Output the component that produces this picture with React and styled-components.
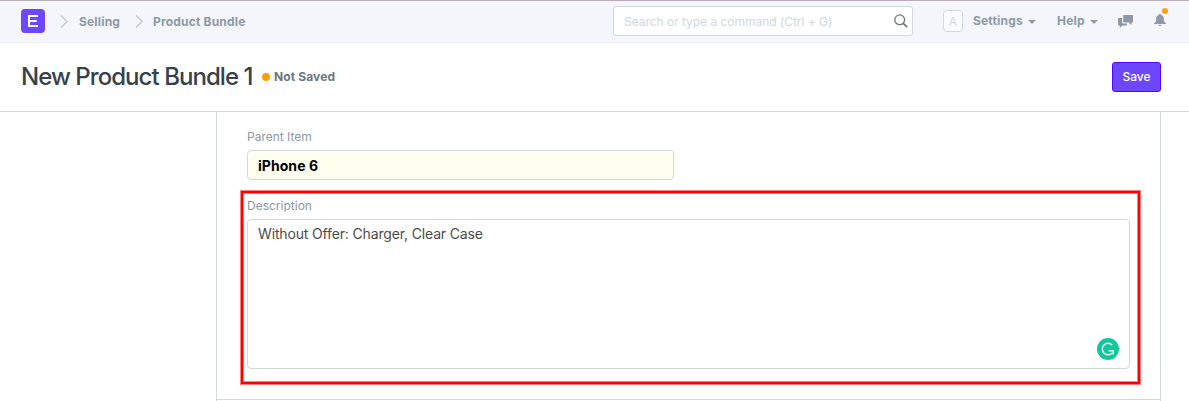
import React from "react";
import styled, { createGlobalStyle } from "styled-components";

const Global = createGlobalStyle`
  * { box-sizing: border-box; }
  body {
    margin: 0;
    background: #fff;
    font-family: Inter, "Liberation Sans", sans-serif;
    font-size: 12px;
    color: #36414c;
    overflow: hidden;
  }
`;

const Page = styled.div`
  height: 401px;
  display: flex;
  flex-direction: column;
  overflow: hidden;
`;

const Navbar = styled.header`
  flex: none;
  height: 43px;
  display: flex;
  align-items: center;
  padding: 0 20px 0 21px;
  background: #f5f6fb;
  border-top: 1px solid #b7aeb8;
  border-bottom: 1px solid #ebeff2;
`;

const Brand = styled.div`
  width: 24px;
  height: 24px;
  margin-top: -2px;
  border-radius: 4px;
  background: #6b48ff;
  display: flex;
  align-items: center;
  justify-content: center;
`;

const Crumbs = styled.nav`
  display: flex;
  align-items: center;
  flex: 1;
`;

const NavText = styled.span`
  font-weight: 700;
  line-height: 18px;
  color: #8d99a6;
  white-space: nowrap;
  letter-spacing: 0.18px;
`;

const MenuText = styled(NavText)`
  margin-top: -1px;
`;

const Chevron = styled.svg`
  width: 8px;
  height: 13px;
  margin: 0 ${(p) => p.$after}px 0 ${(p) => p.$before}px;
  fill: none;
  stroke: #c0cad3;
  stroke-width: 1.4;
`;

const Search = styled.div`
  width: 300px;
  height: 30px;
  margin: -1px 30px 0 0;
  padding: 0 4px 0 10px;
  display: flex;
  align-items: center;
  justify-content: space-between;
  background: #fff;
  border: 1px solid #d1d8dd;
  border-radius: 3px;
  color: #d1d8dd;
  letter-spacing: -0.03px;
`;

const NavTools = styled.div`
  display: flex;
  align-items: center;
  width: 226px;
`;

const Avatar = styled.div`
  width: 20px;
  height: 22px;
  margin: -1px 10px 0 0;
  border: 1px solid #d1d8dd;
  border-radius: 4px;
  display: flex;
  align-items: center;
  justify-content: center;
  color: #d1d8dd;
  background: #fafbfc;
`;

const MenuItem = styled.div`
  flex: none;
  display: flex;
  align-items: center;
  gap: 5px;
  width: ${(p) => p.$width}px;
`;

const Caret = styled.i`
  border: 4px solid transparent;
  border-top-color: #8d99a6;
  border-bottom: 0;
`;

const PageHead = styled.div`
  flex: none;
  height: 69px;
  display: flex;
  align-items: center;
  padding: 0 28px 0 21px;
  border-bottom: 1px solid #d1d8dd;
`;

const Title = styled.h1`
  margin: 0;
  width: 241px;
  font-size: 24px;
  font-weight: 500;
  line-height: 30px;
  letter-spacing: -0.95px;
  white-space: nowrap;
  color: #36414c;
`;

const Status = styled.div`
  flex: 1;
  display: flex;
  align-items: center;
  gap: 4px;
  font-weight: 700;
  letter-spacing: 0.12px;
  color: #6c7680;
`;

const StatusText = styled.span`
  margin-top: -2px;
`;

const Dot = styled.i`
  width: 8px;
  height: 8px;
  border-radius: 50%;
  background: #ffa00a;
`;

const SaveButton = styled.button`
  width: 49px;
  height: 30px;
  padding: 0 0 2px;
  border: 1px solid #5106f5;
  border-radius: 3px;
  background: #6b48ff;
  color: #fff;
  font: 500 12px Inter, sans-serif;
`;

const FormColumn = styled.main`
  flex: 1;
  margin-left: 216px;
  width: 945px;
  border: solid #d1d8dd;
  border-width: 0 1px;
`;

const Section = styled.section`
  height: 288px;
  padding: 16px 20px 0 24px;
  border-bottom: 1px solid #d1d8dd;
`;

const Label = styled.label`
  display: block;
  height: 18px;
  line-height: 18px;
  color: #8d99a6;
`;

const Field = styled.div`
  padding-left: 6px;
`;

const ItemInput = styled.div`
  width: 427px;
  height: 30px;
  margin-top: 4px;
  padding: 1px 10px 0;
  border: 1px solid #d1d8dd;
  border-radius: 4px;
  background: #fffff0;
  color: #000;
  font-size: 14px;
  font-weight: 700;
  line-height: 28px;
  letter-spacing: 0.05px;
`;

const Highlight = styled.div`
  margin-top: 11px;
  height: 193px;
  padding: 4px 8px 0 4px;
  border: 2px solid #f00;
  box-shadow: 0 0 0 1px rgba(255, 0, 0, 0.5), inset 0 0 0 1px rgba(255, 0, 0, 0.5);
`;

const DescriptionBox = styled.div`
  height: 150px;
  margin-top: 4px;
  padding: 4px 10px 8px;
  border: 1px solid #d1d8dd;
  border-radius: 4px;
  display: flex;
  flex-direction: column;
  justify-content: space-between;
  font-size: 14px;
  line-height: 20px;
  letter-spacing: -0.15px;
  color: #4c4c4c;
`;

const Assistant = styled.svg`
  width: 22px;
  height: 22px;
  align-self: flex-end;
`;

const BellIcon = styled.svg`
  flex: none;
  width: 16px;
  height: 22px;
  margin: -8px 0 0 20px;
`;

const ChatIcon = styled.svg`
  flex: none;
  width: 15px;
  height: 13px;
  margin-top: -1px;
`;

export default function App() {
  return (
    <Page>
      <Global />
      <Navbar>
        <Brand>
          <svg width="12" height="12" viewBox="0 0 12 12" fill="none" stroke="#fff" strokeWidth="2">
            <path d="M11 1.1H2V10.9H11M2 6H9.6" />
          </svg>
        </Brand>
        <Crumbs>
          <Chevron $before={15} $after={11} viewBox="0 0 8 13"><path d="M1 .6L7 6.5L1 12.4" /></Chevron>
          <NavText>Selling</NavText>
          <Chevron $before={14.5} $after={10.5} viewBox="0 0 8 13"><path d="M1 .6L7 6.5L1 12.4" /></Chevron>
          <NavText>Product Bundle</NavText>
        </Crumbs>
        <Search>
          <span>Search or type a command (Ctrl + G)</span>
          <svg width="14" height="14" viewBox="0 0 14 14" fill="none" stroke="#6c7680" strokeWidth="1.3">
            <circle cx="5.7" cy="5.8" r="4.9" />
            <path d="M9.2 9.3L13.2 13.2" strokeWidth="1.8" />
          </svg>
        </Search>
        <NavTools>
          <Avatar>A</Avatar>
          <MenuItem $width={84}><MenuText>Settings</MenuText><Caret /></MenuItem>
          <MenuItem $width={61}><MenuText>Help</MenuText><Caret /></MenuItem>
          <ChatIcon viewBox="0 0 15 13" fill="#8d99a6">
            <path d="M6 0H14.2Q15 0 15 .8V6.7Q15 7.5 14.2 7.5H13.5V10L10.8 7.5H6Q5.2 7.5 5.2 6.7V.8Q5.2 0 6 0Z" />
            <path d="M.8 3H4.2V7.5Q4.2 8.5 5.2 8.5H9V9.7Q9 10.5 8.2 10.5H4.3L1.7 13V10.5H.8Q0 10.5 0 9.7V3.8Q0 3 .8 3Z" />
          </ChatIcon>
          <BellIcon viewBox="0 0 16 22">
            <path fill="#8d99a6" d="M5.5 8Q6 7 7 7Q8 7 8.5 8Q10.8 8.8 10.8 11.2C10.8 14.3 11.2 15.3 13 16.2V17H1V16.2C2.8 15.3 3.2 14.3 3.2 11.2Q3.2 8.8 5.5 8ZM5.3 17.7H8.7Q8.2 19 7 19Q5.8 19 5.3 17.7Z" />
            <circle cx="12" cy="4" r="3" fill="#ffa00a" />
          </BellIcon>
        </NavTools>
      </Navbar>
      <PageHead>
        <Title>New Product Bundle 1</Title>
        <Status><Dot /><StatusText>Not Saved</StatusText></Status>
        <SaveButton>Save</SaveButton>
      </PageHead>
      <FormColumn>
        <Section>
          <Field>
            <Label>Parent Item</Label>
            <ItemInput>iPhone 6</ItemInput>
          </Field>
          <Highlight>
            <Label>Description</Label>
            <DescriptionBox>
              <span>Without Offer: Charger, Clear Case</span>
              <Assistant viewBox="0 0 22 22">
                <circle cx="11" cy="11" r="11" fill="#0fc99a" />
                <path d="M15.3 7A5.8 5.8 0 1 0 15.4 14.9M11.6 12.7H16.3V16.6" fill="none" stroke="#fff" strokeWidth="1.4" />
              </Assistant>
            </DescriptionBox>
          </Highlight>
        </Section>
      </FormColumn>
    </Page>
  );
}
